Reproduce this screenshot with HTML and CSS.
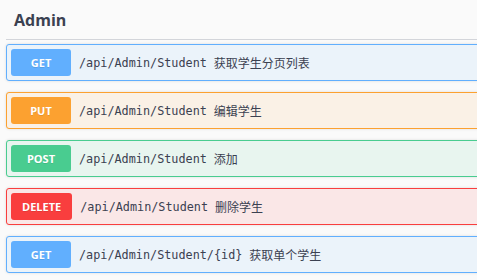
FILE: index.html
```html
<!DOCTYPE html>
<html>
<head>
<meta charset="utf-8">
<title>Admin</title>
<link rel="stylesheet" href="styles.css">
</head>
<body>
  <div class="tag-section">
    <h3 class="opblock-tag">Admin</h3>

    <div class="ops">
      <div class="opblock opblock-get">
        <span class="method">GET</span>
        <span class="path">/api/Admin/Student</span>
        <span class="desc">获取学生分页列表</span>
      </div>
      <div class="opblock opblock-put">
        <span class="method">PUT</span>
        <span class="path">/api/Admin/Student</span>
        <span class="desc">编辑学生</span>
      </div>
      <div class="opblock opblock-post">
        <span class="method">POST</span>
        <span class="path">/api/Admin/Student</span>
        <span class="desc">添加</span>
      </div>
      <div class="opblock opblock-delete">
        <span class="method">DELETE</span>
        <span class="path">/api/Admin/Student</span>
        <span class="desc">删除学生</span>
      </div>
      <div class="opblock opblock-get">
        <span class="method">GET</span>
        <span class="path">/api/Admin/Student/{id}</span>
        <span class="desc">获取单个学生</span>
      </div>
    </div>
  </div>
</body>
</html>
```

FILE: styles.css
```css
html { overflow: hidden; }

body { margin: 0; background: #fafafa; color: #3b4151;
       font-family: "Noto Sans", "Noto Sans CJK SC", sans-serif; }

.tag-section { padding-left: 6px; }

.opblock-tag { margin: 0 -6px 0 0; height: 39px; padding: 0 8px; display: flex; align-items: center;
               font-family: "Open Sans", sans-serif; font-size: 16px; font-weight: 700; color: #3b4151;
               border-bottom: 1px solid #d3d5da; box-sizing: border-box; height: 40px; }

.ops { margin-top: 4px; width: calc(100% + 20px); }

.opblock { display: flex; align-items: center; height: 37px; box-sizing: border-box;
           padding: 0 4px; margin-bottom: 11px; border: 1px solid; border-radius: 3px;
           box-shadow: 0 0 3px rgba(0, 0, 0, 0.12); }

.method { min-width: 60px; height: 27px; box-sizing: border-box; padding: 0 11px;
          display: flex; align-items: center; justify-content: center; border-radius: 3px;
          font-family: "Open Sans", sans-serif; font-size: 11px; font-weight: 700; color: #fff;
          text-shadow: 0 1px 0 rgba(0, 0, 0, 0.1); }

.path { padding: 0 7px 0 8px; font-family: "DejaVu Sans Mono", monospace; font-size: 11.8px; color: #3b4151; }

.desc { font-family: "Noto Sans CJK SC", sans-serif; font-size: 12px; color: #3b4151; }

.opblock-get    { border-color: #61affe; background: #ebf3fa; }
.opblock-get .method    { background: #61affe; }
.opblock-put    { border-color: #fca130; background: #faf1e6; }
.opblock-put .method    { background: #fca130; }
.opblock-post   { border-color: #49cc90; background: #e8f5ef; }
.opblock-post .method   { background: #49cc90; }
.opblock-delete { border-color: #f93e3e; background: #fae7e7; }
.opblock-delete .method { background: #f93e3e; }
```
